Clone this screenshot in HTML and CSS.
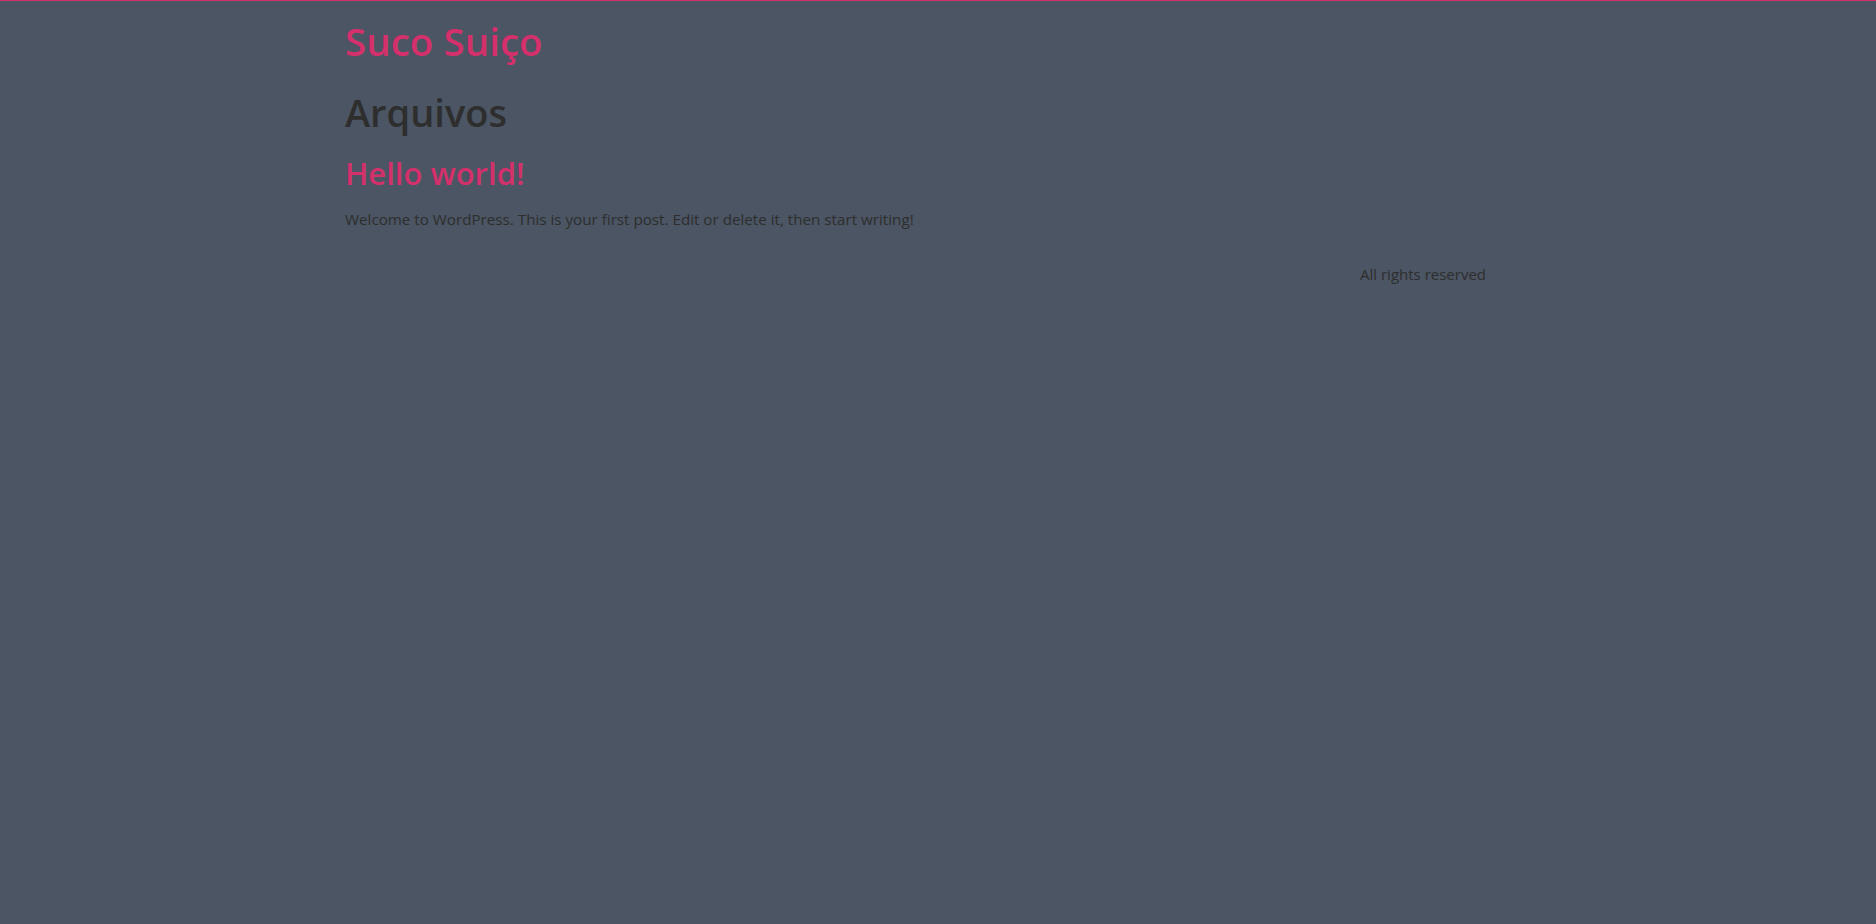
FILE: index.html
```html
<!DOCTYPE html>
<html lang="pt-BR">
<head>
<meta charset="utf-8">
<title>Suco Suiço</title>
<link rel="stylesheet" href="styles.css">
</head>
<body>
<div class="page">
  <header class="site-header">
    <a class="site-title" href="#">Suco Suiço</a>
  </header>
  <main class="content">
    <h1 class="archive-title">Arquivos</h1>
    <article class="post">
      <h2 class="post-title"><a href="#">Hello world!</a></h2>
      <p class="post-excerpt">Welcome to WordPress. This is your first post. Edit or delete it, then start writing!</p>
    </article>
  </main>
  <footer class="site-footer">
    <p class="copyright">All rights reserved</p>
  </footer>
</div>
</body>
</html>
```
FILE: styles.css
```css
html, body {
  margin: 0;
  padding: 0;
}
body {
  background: #4b5563;
  border-top: 1px solid #d3306c;
  min-height: 923px;
  font-family: "Open Sans", "Noto Sans", sans-serif;
  color: #2e2e2e;
}
.page {
  max-width: 1186px;
  margin: 0 auto;
  display: flex;
  flex-direction: column;
}
.site-header {
  padding-top: 18px;
}
.site-title {
  display: block;
  font-size: 38.6px;
  line-height: 45px;
  font-weight: 600;
  color: #d3306c;
  text-decoration: none;
}
.archive-title {
  margin: 26px 0 0;
  font-size: 38px;
  line-height: 1.2;
  font-weight: 600;
  color: #2e2e2e;
}
.post-title {
  margin: 19px 0 0;
  font-size: 31px;
  line-height: 36px;
  font-weight: 600;
}
.post-title a {
  color: #d3306c;
  text-decoration: none;
}
.post-excerpt {
  margin: 17px 0 0;
  font-size: 15.2px;
  line-height: 22px;
}
.site-footer {
  margin-top: 33px;
  padding-right: 45px;
  text-align: right;
}
.copyright {
  margin: 0;
  font-size: 15px;
  line-height: 22px;
}
```
